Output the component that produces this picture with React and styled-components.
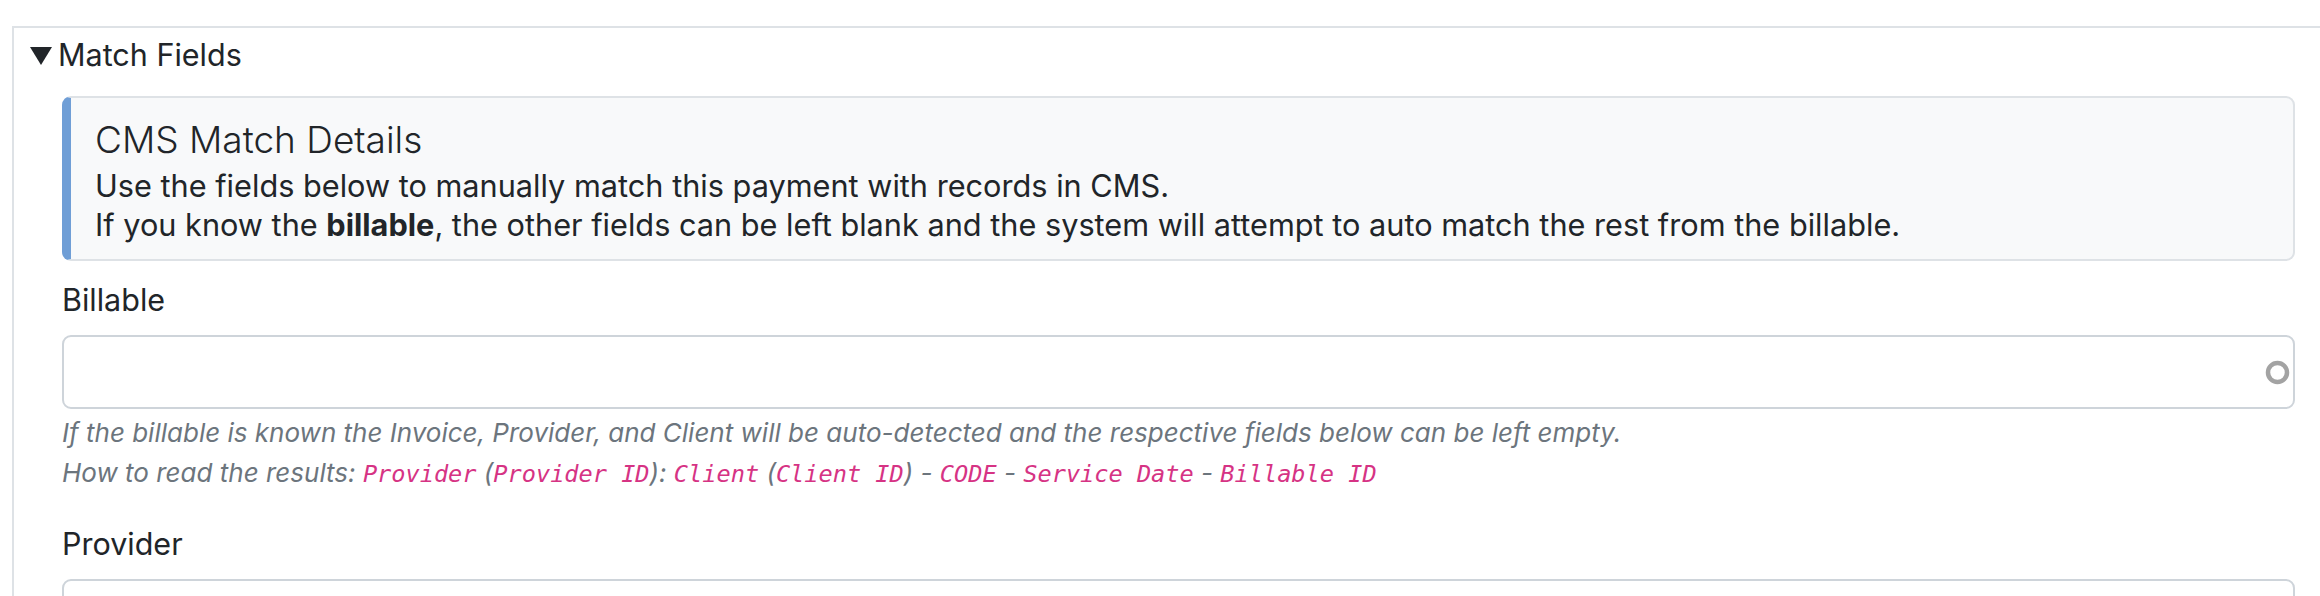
import React from "react";
import styled, { createGlobalStyle } from "styled-components";

const Global = createGlobalStyle`
  html, body {
    margin: 0;
    padding: 0;
    overflow: hidden;
    background: #ffffff;
  }
  body {
    font-family: Inter, "Liberation Sans", sans-serif;
    color: #212529;
  }
  * { box-sizing: border-box; }
`;

const Page = styled.div`
  padding-top: 26px;
  padding-left: 12px;
`;

const Panel = styled.details`
  width: 2333px;
  border: 2px solid #dee2e6;
  border-bottom: none;
  background: #fff;
`;

const Summary = styled.summary`
  display: flex;
  align-items: center;
  gap: 6px;
  list-style: none;
  padding: 4px 0 0 16px;
  font-size: 30.5px;
  line-height: 46px;
  color: #212529;
  cursor: pointer;
  &::-webkit-details-marker { display: none; }
`;

const Caret = styled.svg`
  width: 22px;
  height: 18px;
  flex: none;
  margin-top: 1px;
`;

const Body = styled.div`
  padding: 18px 48px 40px 48px;
`;

const Callout = styled.div`
  background: #f8f9fa;
  border: 2px solid #dee2e6;
  border-left: 9px solid #6f9ed6;
  border-radius: 9px;
  padding: 20px 24px 15px 24px;
`;

const CalloutTitle = styled.h4`
  margin: 0 0 5px 0;
  font-size: 37px;
  font-weight: 300;
  line-height: 43px;
  color: #212529;
`;

const CalloutText = styled.p`
  margin: 0;
  font-size: 30.7px;
  line-height: 39px;
  color: #212529;
  b { font-weight: 700; }
`;

const Field = styled.div`
  margin-top: ${(p) => p.$top}px;
`;

const Label = styled.label`
  display: block;
  font-size: 30.5px;
  line-height: 45px;
  margin-bottom: 13px;
  color: #212529;
`;

const InputWrap = styled.div`
  position: relative;
`;

const Input = styled.input`
  display: block;
  width: 100%;
  height: 74px;
  border: 2px solid #ced4da;
  border-radius: 9px;
  background: #fff;
  padding: 0 24px;
  font-family: inherit;
  font-size: 30px;
  color: #212529;
  outline: none;
`;

const Spinner = styled.svg`
  position: absolute;
  right: 5px;
  top: 25px;
  width: 25px;
  height: 25px;
`;

const Help = styled.div`
  margin-top: 4px;
  font-size: 26px;
  line-height: 40px;
  font-style: italic;
  color: #6c757d;
`;

const Code = styled.code`
  font-family: "DejaVu Sans Mono", "Liberation Mono", monospace;
  font-size: 23.6px;
  line-height: 1;
  font-style: italic;
  color: #d63384;
`;

export default function App() {
  return (
    <>
      <Global />
      <Page>
        <Panel open>
          <Summary>
            <Caret viewBox="0 0 22 18">
              <polygon points="0,0 22,0 11,18" fill="#212529" />
            </Caret>
            Match Fields
          </Summary>
          <Body>
            <Callout>
              <CalloutTitle>CMS Match Details</CalloutTitle>
              <CalloutText>
                Use the fields below to manually match this payment with records in CMS.
                <br />
                If you know the <b>billable</b>, the other fields can be left blank and the
                system will attempt to auto match the rest from the billable.
              </CalloutText>
            </Callout>

            <Field $top={16}>
              <Label>Billable</Label>
              <InputWrap>
                <Input type="text" />
                <Spinner viewBox="0 0 25 25">
                  <circle cx="12.5" cy="12.5" r="9.5" fill="none" stroke="#a3a3a3" strokeWidth="4.5" />
                </Spinner>
              </InputWrap>
              <Help>
                <div>
                  If the billable is known the Invoice, Provider, and Client will be
                  auto-detected and the respective fields below can be left empty.
                </div>
                <div>
                  How to read the results: <Code>Provider</Code> (<Code>Provider ID</Code>):{" "}
                  <Code>Client</Code> (<Code>Client ID</Code>) - <Code>CODE</Code> -{" "}
                  <Code>Service Date</Code> - <Code>Billable ID</Code>
                </div>
              </Help>
            </Field>

            <Field $top={28}>
              <Label>Provider</Label>
              <InputWrap>
                <Input type="text" />
              </InputWrap>
            </Field>
          </Body>
        </Panel>
      </Page>
    </>
  );
}
